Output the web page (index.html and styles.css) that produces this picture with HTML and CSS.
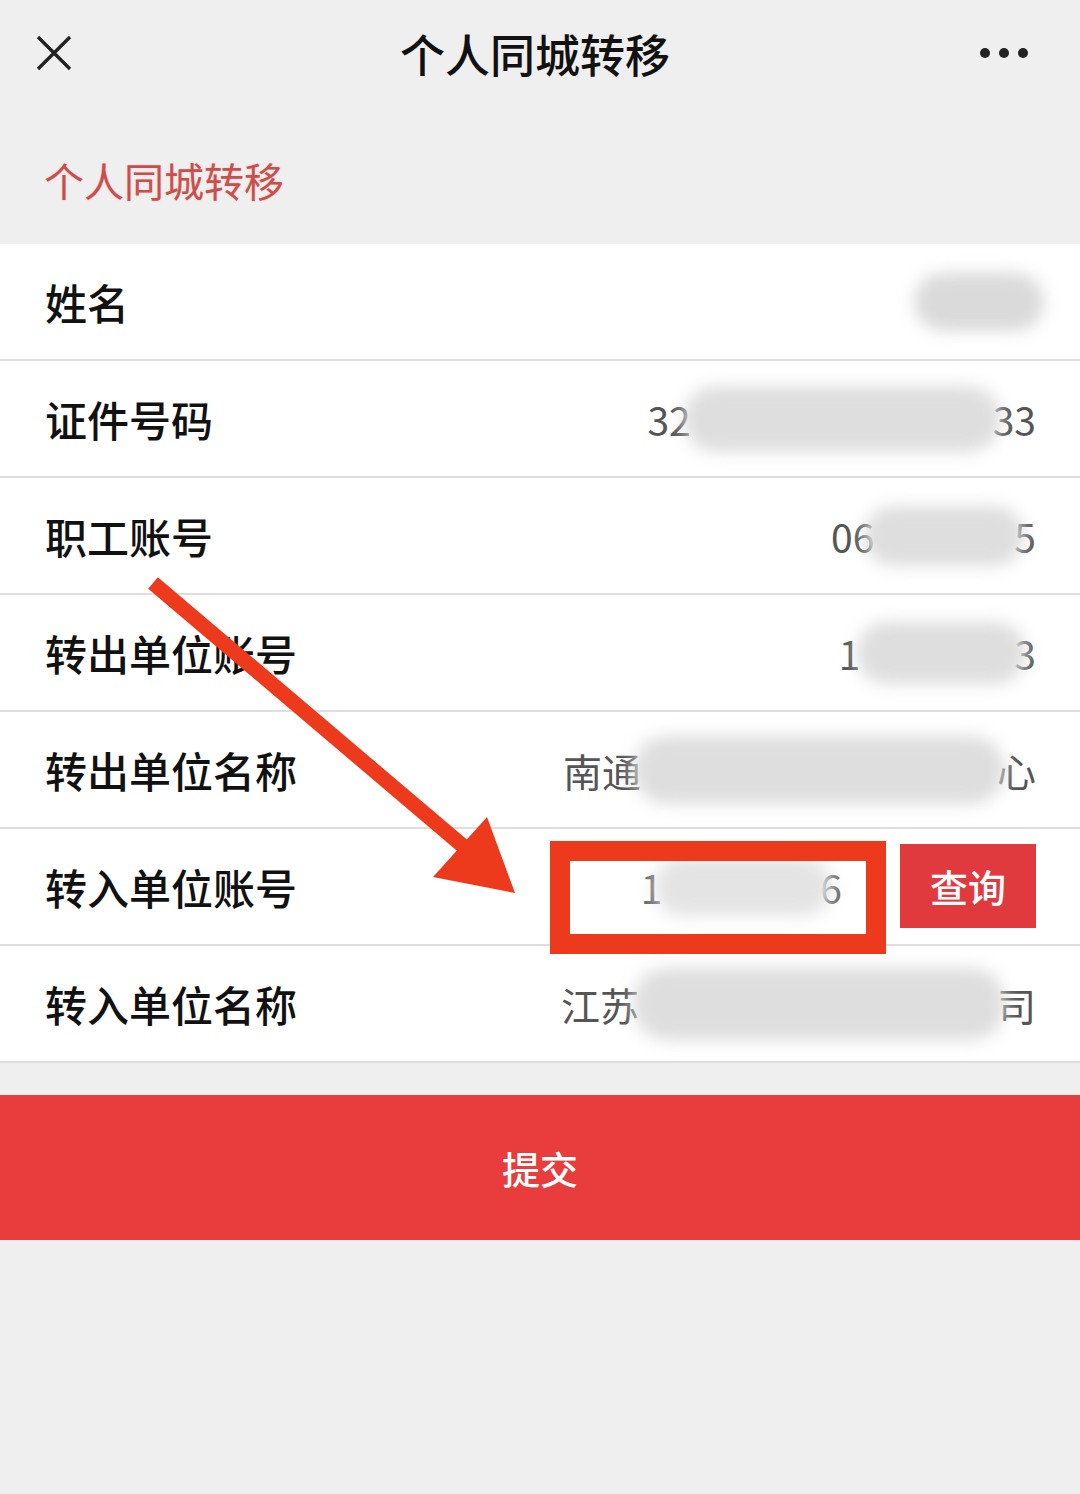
FILE: index.html
```html
<!DOCTYPE html>
<html lang="zh-CN">
<head>
<meta charset="utf-8">
<title>个人同城转移</title>
<link rel="stylesheet" href="styles.css">
</head>
<body>
<div class="page">
  <header class="topbar">
    <svg class="close" viewBox="0 0 36 36" width="36" height="36"><path d="M2 2L34 34M34 2L2 34" stroke="#222" stroke-width="3.4" fill="none"/></svg>
    <h1 class="title">个人同城转移</h1>
    <div class="more"><span></span><span></span><span></span></div>
  </header>

  <div class="section-title">个人同城转移</div>

  <div class="list">
    <div class="row">
      <div class="label">姓名</div>
      <div class="value"><span class="blob blob-name"></span></div>
    </div>
    <div class="row">
      <div class="label">证件号码</div>
      <div class="value"><span>32</span><span class="blob blob-id"></span><span>33</span></div>
    </div>
    <div class="row">
      <div class="label">职工账号</div>
      <div class="value"><span>06</span><span class="blob blob-acc"></span><span>5</span></div>
    </div>
    <div class="row">
      <div class="label">转出单位账号</div>
      <div class="value"><span>1</span><span class="blob blob-acc2"></span><span>3</span></div>
    </div>
    <div class="row">
      <div class="label">转出单位名称</div>
      <div class="value"><span>南通</span><span class="blob blob-org"></span><span>心</span></div>
    </div>
    <div class="row row-input">
      <div class="label">转入单位账号</div>
      <div class="value">
        <div class="field"><span>1</span><span class="blob blob-field"></span><span>6</span></div>
        <button class="query">查询</button>
      </div>
      <div class="mark-box"></div>
    </div>
    <div class="row">
      <div class="label">转入单位名称</div>
      <div class="value"><span>江苏</span><span class="blob blob-org2"></span><span>司</span></div>
    </div>
  </div>

  <div class="submit-wrap">
    <button class="submit">提交</button>
  </div>

  <svg class="arrow" viewBox="0 0 1080 1494" width="1080" height="1494">
    <line x1="153" y1="583" x2="470" y2="852" stroke="#ee3a1c" stroke-width="15" stroke-linecap="butt"/>
    <polygon points="515,893 433,877 487,817" fill="#ee3a1c"/>
  </svg>
</div>
</body>
</html>
```
FILE: styles.css
```css
* { box-sizing: border-box; }
html, body { margin: 0; padding: 0; }
body {
  background: #efefef;
  font-family: "Noto Sans CJK SC", "Noto Sans", sans-serif;
  color: #111;
}
.page {
  position: relative;
  width: 1080px;
  min-height: 1494px;
  background: #efefef;
}
.topbar {
  height: 120px;
  display: flex;
  align-items: center;
  justify-content: space-between;
  padding: 0 52px 14px 36px;
}
.close { display: block; }
.title {
  margin: 0;
  font-size: 45px;
  font-weight: 500;
  color: #111;
  padding-left: 18px;
}
.more { display: flex; gap: 9px; }
.more span {
  width: 10px; height: 10px;
  border-radius: 50%;
  background: #222;
}
.section-title {
  height: 124px;
  display: flex;
  align-items: center;
  padding-left: 44px;
  padding-bottom: 4px;
  font-size: 40px;
  color: #c8504c;
  text-shadow: 0 0 2px rgba(230, 120, 120, 0.35);
}
.list { background: #fff; }
.row {
  position: relative;
  height: 117px;
  border-bottom: 2px solid #dedede;
  display: flex;
  align-items: center;
  justify-content: space-between;
  padding: 0 44px 0 45px;
}
.label {
  font-size: 42px;
  font-weight: 500;
  color: #111;
}
.value {
  display: flex;
  align-items: center;
  font-size: 39px;
  color: #555;
}
.blob {
  display: inline-block;
  height: 62px;
  border-radius: 34px;
  background: #dedede;
  filter: blur(8px);
  position: relative;
  z-index: 1;
}
.blob-name { width: 130px; height: 58px; margin-right: -8px; background: #dadada; }
.blob-id { width: 318px; margin: 0 -8px 0 -8px; height: 66px; }
.blob-acc { width: 160px; margin: 0 -10px 0 -10px; height: 60px; }
.blob-acc2 { width: 170px; margin: 0 -12px 0 -4px; height: 62px; }
.blob-org { width: 372px; margin: 0 -8px 0 -8px; height: 68px; }
.blob-org2 { width: 372px; margin: 0 -8px 0 -6px; height: 72px; }
.blob-field { width: 178px; margin: 0 -12px 0 -8px; height: 58px; background: #e4e4e4; }

.row-input .value { gap: 34px; }
.field {
  width: 296px;
  height: 73px;
  background: #fff;
  display: flex;
  align-items: center;
  justify-content: flex-end;
  padding-right: 24px;
  font-size: 39px;
  color: #666;
}
.query {
  width: 136px;
  height: 84px;
  border: 0;
  background: #e13a3e;
  color: #fff;
  font-family: "Noto Sans CJK SC", sans-serif;
  font-size: 38px;
  font-weight: 500;
  margin-top: -2px;
}
.mark-box {
  position: absolute;
  left: 550px;
  top: 12px;
  width: 336px;
  height: 113px;
  border: 20px solid #ee3a1c;
  z-index: 2;
}
.submit-wrap {
  padding-top: 32px;
}
.submit {
  display: block;
  width: 100%;
  height: 145px;
  border: 0;
  background: #e83c3d;
  color: #fff;
  font-family: "Noto Sans CJK SC", sans-serif;
  font-size: 38px;
  font-weight: 500;
}
.arrow {
  position: absolute;
  left: 0;
  top: 0;
  pointer-events: none;
  z-index: 3;
}
```
